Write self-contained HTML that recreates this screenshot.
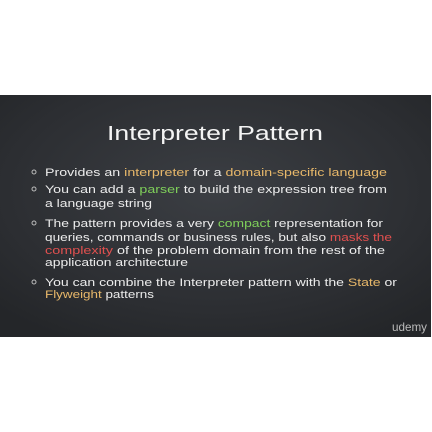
<!DOCTYPE html>
<html><head><style>
body{margin:0;width:432px;height:432px;background:#fff;overflow:hidden}
svg{display:block}
text{font-family:"Liberation Sans",sans-serif;fill:#ececec;font-size:11px}
.o{fill:#e8b86a}.g{fill:#7fcf5a}.r{fill:#e0504f}
</style></head><body>
<svg width="432" height="432" viewBox="0 0 432 432">
<defs><radialGradient id="bg" cx="50%" cy="40%" r="70%"><stop offset="0" stop-color="#3b3e43"/><stop offset="0.7" stop-color="#2c2e32"/><stop offset="1" stop-color="#242629"/></radialGradient></defs>
<rect x="0" y="95" width="431" height="242" fill="url(#bg)"/>
<text x="107" y="140" font-size="20" textLength="216" lengthAdjust="spacingAndGlyphs" style="fill:#f4f4f4;font-size:20px">Interpreter Pattern</text>
<g fill="none" stroke="#bbb" stroke-width="1">
<circle cx="34" cy="172" r="2"/><circle cx="34" cy="189" r="2"/><circle cx="34" cy="223" r="2"/><circle cx="34" cy="282" r="2"/>
</g>
<text x="45" y="176" textLength="342" lengthAdjust="spacingAndGlyphs">Provides an <tspan class="o">interpreter</tspan> for a <tspan class="o">domain-specific language</tspan></text>
<text x="45" y="193" textLength="342" lengthAdjust="spacingAndGlyphs">You can add a <tspan class="g">parser</tspan> to build the expression tree from</text>
<text x="45" y="207" textLength="107" lengthAdjust="spacingAndGlyphs">a language string</text>
<text x="45" y="227" textLength="338" lengthAdjust="spacingAndGlyphs">The pattern provides a very <tspan class="g">compact</tspan> representation for</text>
<text x="45" y="241" textLength="347" lengthAdjust="spacingAndGlyphs">queries, commands or business rules, but also <tspan class="r">masks the</tspan></text>
<text x="45" y="254" textLength="340" lengthAdjust="spacingAndGlyphs"><tspan class="r">complexity</tspan> of the problem domain from the rest of the</text>
<text x="45" y="266" textLength="143" lengthAdjust="spacingAndGlyphs">application architecture</text>
<text x="45" y="286" textLength="352" lengthAdjust="spacingAndGlyphs">You can combine the Interpreter pattern with the <tspan class="o">State</tspan> or</text>
<text x="45" y="298" textLength="109" lengthAdjust="spacingAndGlyphs"><tspan class="o">Flyweight</tspan> patterns</text>
<text x="392" y="331" textLength="35" lengthAdjust="spacingAndGlyphs" style="fill:#bbb;font-size:12px">udemy</text>
</svg>
</body></html>
